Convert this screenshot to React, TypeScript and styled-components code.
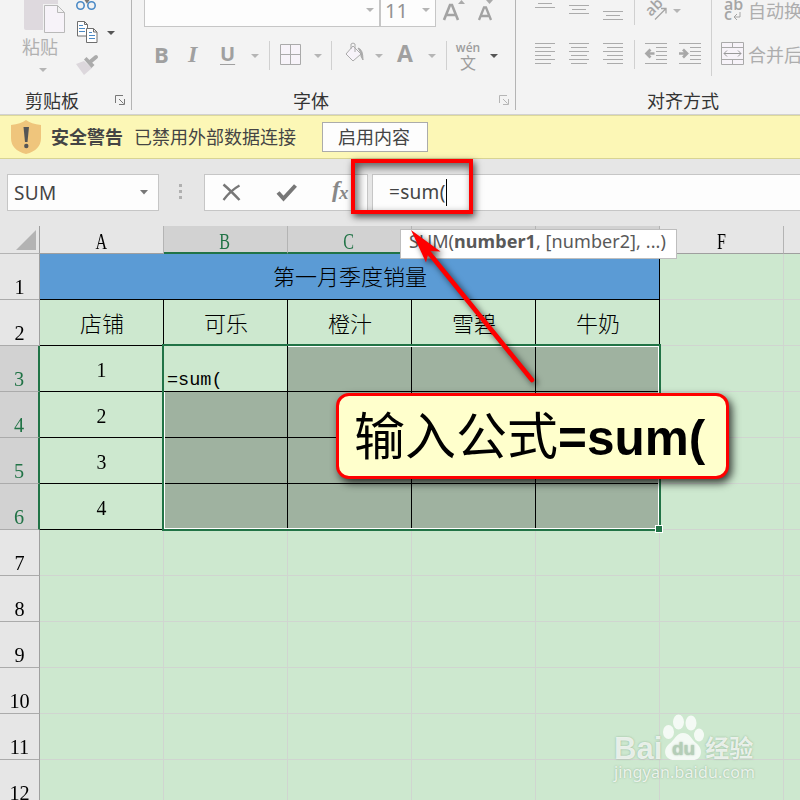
import React from 'react';
import styled, { createGlobalStyle, css } from 'styled-components';

const UI = '"Noto Sans", "Noto Sans CJK SC", sans-serif';
const CJK = '"Noto Sans CJK SC", "Noto Sans", sans-serif';
const SHEET = '"Liberation Serif", "Noto Sans CJK SC", serif';

const GlobalStyle = createGlobalStyle`
  * { box-sizing: border-box; }
  html, body { margin: 0; padding: 0; overflow: hidden; }
`;

const Window = styled.div`
  position: relative;
  width: 800px;
  height: 800px;
  overflow: hidden;
  display: flex;
  flex-direction: column;
  background: #e6e6e6;
  font-family: ${UI};
`;

/* ---------- ribbon ---------- */
const Ribbon = styled.div`
  flex: none;
  display: flex;
  height: 115px;
  background: #f3f3f3;
  border-bottom: 1px solid #d2d2d2;
`;

const Group = styled.section<{ $w: number }>`
  flex: none;
  display: flex;
  flex-direction: column;
  width: ${p => p.$w}px;
  height: 110px;
  border-right: 1px solid #b4b4b4;
`;

const GroupTools = styled.div`
  display: flex;
  height: 87px;
`;

const GroupCaption = styled.div<{ $left: number }>`
  display: flex;
  align-items: center;
  justify-content: space-between;
  height: 23px;
  padding: 3px 6px 0 ${p => p.$left}px;
  font: 18px/20px ${CJK};
  color: #333;
  white-space: nowrap;
`;

const Stack = styled.div<{ $w: number }>`
  flex: none;
  display: flex;
  flex-direction: column;
  width: ${p => p.$w}px;
`;

const Strip = styled.div<{ $h: number; $pad?: number }>`
  flex: none;
  display: flex;
  height: ${p => p.$h}px;
  padding-left: ${p => p.$pad ?? 0}px;
`;

const Tool = styled.div<{ $w: number }>`
  flex: none;
  width: ${p => p.$w}px;
  display: flex;
`;

const Glyph = styled.svg`
  flex: none;
  display: block;
  overflow: visible;
`;

const PasteLabel = styled.div`
  height: 26px;
  padding-left: 22px;
  font: 18px/24px ${CJK};
  color: #b1b1b1;
`;

const Combo = styled.div<{ $w: number }>`
  flex: none;
  display: flex;
  justify-content: space-between;
  width: ${p => p.$w}px;
  height: 27px;
  padding: 0 5px 0 4px;
  border: 1px solid #c6c6c6;
  border-top: 0;
  background: #fdfdfd;
  font: 20px/22px ${UI};
  color: #929292;
`;

const Letter = styled.span<{ $size: number; $top: number; $italic?: boolean; $under?: boolean }>`
  margin-top: ${p => p.$top}px;
  height: 24px;
  font: ${p => (p.$italic ? 'italic' : 'normal')} 700 ${p => p.$size}px/24px
    ${p => (p.$italic ? '"Liberation Serif", serif' : '"Open Sans", sans-serif')};
  color: #a0a0a0;
  ${p => p.$under && css`text-decoration: underline; text-decoration-thickness: 1px; text-underline-offset: 3px;`}
`;

const Separator = styled.i<{ $top: number; $h: number }>`
  flex: none;
  width: 1px;
  height: ${p => p.$h}px;
  margin-top: ${p => p.$top}px;
  background: #d0d0d0;
`;

const Pinyin = styled.div`
  width: 22px;
  margin-top: 13px;
  display: flex;
  flex-direction: column;
  align-items: center;
  color: #9d9d9d;
  font: 600 12px/14px "Open Sans", sans-serif;
  span { font: 16px/14px ${CJK}; }
`;

const ToolText = styled.span<{ $top: number }>`
  margin: ${p => p.$top}px 0 0 -1px;
  height: 24px;
  font: 18px/24px ${CJK};
  color: #adadad;
  white-space: nowrap;
`;

/* ---------- message bar ---------- */
const MessageBar = styled.div`
  flex: none;
  display: flex;
  align-items: center;
  height: 44px;
  padding-left: 11px;
  background: #fcf7b6;
  border-top: 1px solid #dcd89b;
  border-bottom: 1px solid #d8d493;
  font: 18px/24px ${CJK};
  color: #444;
  white-space: nowrap;
`;

const Warning = styled.strong`
  margin: -2px 11px 0 10px;
`;

const Notice = styled.span`
  margin-top: -2px;
`;

const EnableButton = styled.button`
  width: 106px;
  height: 30px;
  margin-left: 26px;
  padding: 0 2px 2px 0;
  border: 1px solid #ababab;
  background: #fdfdfd;
  font: 18px/24px ${CJK};
  color: #444;
`;

/* ---------- formula bar ---------- */
const FormulaBar = styled.div`
  flex: none;
  display: flex;
  height: 67px;
  padding: 15px 0 0 7px;
`;

const FieldBox = styled.div<{ $w: number; $ml?: number }>`
  flex: none;
  display: flex;
  align-items: center;
  width: ${p => p.$w}px;
  height: 37px;
  margin-left: ${p => p.$ml ?? 0}px;
  border: 1px solid #c6c6c6;
  background: #fdfdfd;
  color: #444;
  font: 19px/34px ${UI};
`;

const NameText = styled.span`
  flex: 1;
  padding-left: 6px;
  letter-spacing: 0.3px;
`;

const FormulaText = styled.span`
  margin: -1px 0 0 16px;
  letter-spacing: 0.3px;
`;

const Caret = styled.i`
  width: 1px;
  height: 27px;
  background: #000;
`;

const Dots = styled.div`
  display: flex;
  flex-direction: column;
  gap: 3px;
  margin: 10px 0 0 20px;
  i { width: 3px; height: 3px; background: #b0b0b0; }
`;

/* ---------- sheet ---------- */
const Sheet = styled.div`
  position: relative;
  isolation: isolate;
  flex: none;
  width: 908px;
  height: 574px;
  overflow: hidden;
`;

const Row = styled.div<{ $h?: number }>`
  display: flex;
  height: ${p => p.$h ?? 46}px;
`;

const ColumnHead = styled.div<{ $on?: boolean }>`
  flex: none;
  display: flex;
  justify-content: center;
  width: 124px;
  height: 28px;
  padding-right: 1px;
  border-right: 1px solid #b4b4b4;
  border-bottom: ${p => (p.$on ? '2px solid #217346' : '1px solid #9f9f9f')};
  background: ${p => (p.$on ? '#d2d2d2' : '#e6e6e6')};
  color: ${p => (p.$on ? '#217346' : '#000')};
  font: 23px/32px ${SHEET};
  span { transform: scaleX(0.7); }
`;

const Corner = styled.div`
  flex: none;
  width: 40px;
  height: 28px;
  padding: 4px 0 0 16px;
  border-right: 1px solid #9f9f9f;
  border-bottom: 1px solid #b4b4b4;
`;

const RowHead = styled.div<{ $on?: boolean }>`
  flex: none;
  width: 40px;
  height: 46px;
  padding-top: 20px;
  text-align: center;
  border-right: ${p => (p.$on ? '2px solid #217346' : '1px solid #9f9f9f')};
  border-bottom: 1px solid #ababab;
  background: ${p => (p.$on ? '#d2d2d2' : '#e6e6e6')};
  color: ${p => (p.$on ? '#217346' : '#000')};
  font: 22px/26px ${SHEET};
  span { display: block; transform: scaleX(0.92); }
`;

type CellKind = 'empty' | 'data' | 'picked' | 'edit' | 'title';
const fills: Record<CellKind, string> = {
  empty: '#cde8cf', data: '#cde8cf', picked: '#9fb2a0', edit: '#cde8cf', title: '#5b9bd5',
};

const Cell = styled.div<{ $kind: CellKind; $num?: boolean }>`
  flex: none;
  width: ${p => (p.$kind === 'title' ? 620 : 124)}px;
  height: 46px;
  padding: ${p => (p.$kind === 'data' && !p.$num ? 9 : 8)}px 0 0 1px;
  border-right: 1px solid ${p => (p.$kind === 'empty' ? '#d0d5d0' : '#000')};
  border-bottom: 1px solid ${p => (p.$kind === 'empty' ? '#d0d5d0' : '#000')};
  background: ${p => fills[p.$kind]};
  color: #000;
  text-align: center;
  font: ${p => (p.$num ? 400 : 300)} 22px/32px ${SHEET};
  ${p => p.$num && css`
    padding-left: 0;
    span { display: block; transform: scaleX(0.9); }
  `}
  ${p => p.$kind === 'edit' && css`
    position: relative;
    z-index: 2;
    padding: 19px 0 0 3px;
    text-align: left;
    font: 18.5px/32px "Liberation Mono", monospace;
  `}
`;

const Selection = styled.div`
  position: absolute;
  z-index: 1;
  left: 162px;
  top: 118px;
  width: 499px;
  height: 187px;
  border: 2px solid #217346;
  box-shadow: inset 0 0 0 1px #fff;
`;

const SelectionEdge = styled(Selection)`
  z-index: 3;
  box-shadow: none;
`;

const FillHandle = styled.i`
  position: absolute;
  right: -4px;
  bottom: -4px;
  width: 8px;
  height: 8px;
  border: 1px solid #fff;
  background: #217346;
`;

/* ---------- overlays ---------- */
const FunctionTip = styled.div`
  position: absolute;
  left: 400px;
  top: 229px;
  width: 277px;
  height: 30px;
  padding-left: 8px;
  border: 1px solid #bebebe;
  background: #fff;
  color: #595959;
  font: 18px/23px ${UI};
  letter-spacing: 0.07px;
  white-space: nowrap;
`;

const Highlight = styled.div`
  position: absolute;
  left: 351px;
  top: 159px;
  width: 122px;
  height: 55px;
  border: 4px solid #fe0000;
  box-shadow: 2px 3px 7px rgba(0, 0, 0, 0.65), inset 3px 4px 8px rgba(0, 0, 0, 0.6);
`;

const Pointer = styled.svg`
  position: absolute;
  left: 400px;
  top: 220px;
  overflow: visible;
  filter: drop-shadow(3px 3px 3px rgba(0, 0, 0, 0.65));
`;

const Callout = styled.div`
  position: absolute;
  left: 336px;
  top: 393px;
  width: 393px;
  height: 86px;
  padding-left: 15px;
  border: 3px solid #fe0000;
  border-radius: 13px;
  background: #ffffcc;
  box-shadow: 3px 4px 8px rgba(0, 0, 0, 0.75);
  color: #000;
  white-space: nowrap;
  font: 51px/74px ${CJK};
  b { font: 700 49.5px/74px "Liberation Sans", sans-serif; }
`;

const Watermark = styled.div`
  position: absolute;
  left: 614px;
  top: 713px;
  width: 146px;
  color: rgba(255, 255, 255, 0.78);
  text-shadow: 0 0 2px rgba(100, 140, 105, 0.6);
`;

const Brand = styled.div`
  display: flex;
  align-items: flex-end;
  height: 48px;
  font: 700 31px/25px "Liberation Sans", sans-serif;
  span + svg + span { font: 700 24px/28px ${CJK}; }
`;

const Site = styled.div`
  padding-top: 1px;
  font: 16px/20px ${UI};
  letter-spacing: 0.15px;
`;

const Drop = ({ dark, top }: { dark?: boolean; top: number }) => (
  <Glyph width="8" height={top + 5}>
    <path d={`M0 ${top}h8l-4 4z`} fill={dark ? '#555' : '#b5b5b5'} />
  </Glyph>
);

const Launcher = ({ dark }: { dark?: boolean }) => (
  <Glyph width="10" height="10" stroke={dark ? '#777' : '#b5b5b5'} fill="none">
    <path d="M.5 8V.5H8M4 4l4.500 4.500M9.500 4v5.500H4" />
  </Glyph>
);

const Lines = ({ kind }: { kind: 'left' | 'center' | 'right' }) => (
  <Glyph width="20" height="40" stroke="#ababab" fill="none">
    {[43, 47, 51, 55, 59, 63].map((y, i) => {
      const w = i % 2 ? 16 : 20;
      const x = kind === 'left' ? 0 : kind === 'right' ? 20 - w : (20 - w) / 2;
      return <path key={y} d={`M${x} ${y - 24.5}h${w}`} />;
    })}
  </Glyph>
);

const Indent = ({ into }: { into?: boolean }) => (
  <Glyph width="22" height="44" stroke="#ababab" fill="none">
    <path d="M0 18.500h22M11 22.500h11M11 26.500h11M11 30.500h11M11 34.500h11M0 38.500h22" />
    <path d={into ? 'M0 28.500h7M4 24.500l4 4-4 4' : 'M9.500 28.500H2.500M5.500 24.500l-4 4 4 4'} strokeWidth="2.700" stroke="#a8a8a8" />
  </Glyph>
);

const columns = ['A', 'B', 'C', 'D', 'E', 'F', ''];
const products = ['店铺', '可乐', '橙汁', '雪碧', '牛奶'];

export default function App() {
  return (
    <>
      <GlobalStyle />
      <Window>
        <Ribbon>
          <Group $w={132}>
            <GroupTools>
              <Stack $w={76}>
                <Glyph width="66" height="34">
                  <path d="M24 0h34v30H26q-2 0-2-2z" fill="#ded9de" />
                  <path d="M43 4h15l7 8v21H43z" fill="#f2f2f2" />
                  <path d="M44.500 5.500h13l7 7v20h-20zM57.500 5.500v7h7" fill="#f7f3f9" stroke="#b9b9b9" />
                </Glyph>
                <PasteLabel>粘贴</PasteLabel>
                <Strip $h={16} $pad={39}><Drop top={8} /></Strip>
              </Stack>
              <Stack $w={55}>
                <Glyph width="22" height="12" fill="none">
                  <path d="M7-4l4 6 4-6" stroke="#777" strokeWidth="2" />
                  <circle cx="4.500" cy="5.500" r="3.700" stroke="#4b8ac6" strokeWidth="1.600" />
                  <circle cx="15.500" cy="5.500" r="3.700" stroke="#4b8ac6" strokeWidth="1.600" />
                </Glyph>
                <Strip $h={38} $pad={1}>
                  <Tool $w={30}>
                    <Glyph width="22" height="34" fill="#fff" stroke="#6e6e6e">
                      <path d="M.5 9.500h7l3 3v11.500H.5zM7.500 9.500v3h3" />
                      <path d="M9.500 16.500h7l3.500 3.500v10.500H9.500zM16.500 16.500v3.500h3.500" />
                      <path d="M2 13.500h4M2 16.500h6M2 19.500h6M12 20.500h3M12 23.500h6M12 26.500h6" stroke="#4b8ac6" />
                    </Glyph>
                  </Tool>
                  <Drop dark top={19} />
                </Strip>
                <Glyph width="22" height="28">
                  <path d="M0 14l8-3 8 7-8 7z" fill="#dcd7dc" />
                  <path d="M8 9.500l2.500-2.500 8 8-3 3z" fill="#ababab" />
                  <path d="M14 12l6-5" stroke="#ababab" strokeWidth="4" strokeLinecap="round" />
                </Glyph>
              </Stack>
            </GroupTools>
            <GroupCaption $left={25}>剪贴板<Launcher dark /></GroupCaption>
          </Group>

          <Group $w={384}>
            <GroupTools>
              <Stack $w={383}>
                <Strip $h={28} $pad={12}>
                  <Combo $w={236}><span /><Drop top={8} /></Combo>
                  <Combo $w={56}>11<Drop top={8} /></Combo>
                  <Tool $w={33}>
                    <Glyph width="30" height="22">
                      <path d="M22 4l3.500-4 3.500 4z" fill="#aaa" />
                      <path d="M8 20l6-15h2l6 15M10 15h9" fill="none" stroke="#a3a3a3" strokeWidth="2.600" />
                    </Glyph>
                  </Tool>
                  <Glyph width="30" height="22">
                    <path d="M17 0h7l-3.500 4z" fill="#aaa" />
                    <path d="M10 20l5-12.500h2l5 12.500M12 16h8" fill="none" stroke="#a3a3a3" strokeWidth="2.300" />
                  </Glyph>
                </Strip>
                <Strip $h={59} $pad={22}>
                  <Tool $w={34}><Letter $size={22} $top={14}>B</Letter></Tool>
                  <Tool $w={32}><Letter $size={24} $top={14} $italic>I</Letter></Tool>
                  <Tool $w={31}><Letter $size={20} $top={14} $under>U</Letter></Tool>
                  <Tool $w={18}><Drop top={26} /></Tool>
                  <Tool $w={11}><Separator $top={13} $h={29} /></Tool>
                  <Tool $w={34}>
                    <Glyph width="22" height="40" fill="#f7f3f9" stroke="#aaa">
                      <path d="M.5 16.500h20v20H.5zM10.500 16.500v20M.5 26.500h20" />
                    </Glyph>
                  </Tool>
                  <Tool $w={17}><Drop top={26} /></Tool>
                  <Tool $w={14}><Separator $top={13} $h={29} /></Tool>
                  <Tool $w={30}>
                    <Glyph width="20" height="40" fill="#f7f3f9" stroke="#aaa">
                      <path d="M1 26l7-8 8 8-8 7z" />
                      <path d="M6 21v-5q2-2 4 0v8" fill="none" />
                      <path d="M13 20q5 1 5 12-3-4-2-7z" fill="#aaa" />
                    </Glyph>
                  </Tool>
                  <Tool $w={22}><Drop top={26} /></Tool>
                  <Tool $w={31}><Letter $size={23} $top={13}>A</Letter></Tool>
                  <Tool $w={18}><Drop top={26} /></Tool>
                  <Tool $w={11}><Separator $top={13} $h={29} /></Tool>
                  <Tool $w={33}><Pinyin>wén<span>文</span></Pinyin></Tool>
                  <Drop dark top={26} />
                </Strip>
              </Stack>
            </GroupTools>
            <GroupCaption $left={161}>字体<Launcher /></GroupCaption>
          </Group>

          <Group $w={344}>
            <GroupTools>
              <Stack $w={195}>
                <Strip $h={25} $pad={19}>
                  <Tool $w={34}><Glyph width="20" height="22" stroke="#ababab"><path d="M3 3.500h14M0 7.500h20M0 -.5h20" /></Glyph></Tool>
                  <Tool $w={34}><Glyph width="20" height="22" stroke="#ababab"><path d="M0 5.500h20M3 9.500h14M0 13.500h20" /></Glyph></Tool>
                  <Tool $w={31}><Glyph width="20" height="22" stroke="#ababab"><path d="M0 11.500h20M3 15.500h14M0 19.500h20" /></Glyph></Tool>
                  <Tool $w={12}><Separator $top={0} $h={25} /></Tool>
                  <Tool $w={27}>
                    <Glyph width="22" height="22">
                      <text x="5" y="17" transform="rotate(-45 5 17)" fontSize="15" fontWeight="600" fontFamily="Open Sans" fill="#a5a5a5">ab</text>
                      <path d="M9 19.500L20 8.500M15 8.500h5v5" fill="none" stroke="#a5a5a5" strokeWidth="1.300" />
                    </Glyph>
                  </Tool>
                  <Drop top={9} />
                </Strip>
                <Strip $h={60} $pad={19}>
                  <Tool $w={34}><Lines kind="left" /></Tool>
                  <Tool $w={34}><Lines kind="center" /></Tool>
                  <Tool $w={31}><Lines kind="right" /></Tool>
                  <Tool $w={11}><Separator $top={15} $h={29} /></Tool>
                  <Tool $w={34}><Indent /></Tool>
                  <Indent into />
                </Strip>
              </Stack>
              <Separator $top={0} $h={76} />
              <Stack $w={140}>
                <Strip $h={28} $pad={11}>
                  <Tool $w={26}>
                    <Glyph width="22" height="22" fontSize="16" fontFamily="Open Sans" fontWeight="600" fill="#a5a5a5">
                      <text x="1" y="10">ab</text><text x="1" y="20">c</text>
                      <path d="M17 12v5h-6M14 14l-3 3 3 3" fill="none" stroke="#a5a5a5" />
                    </Glyph>
                  </Tool>
                  <ToolText $top={-2}>自动换行</ToolText>
                </Strip>
                <Strip $h={40} $pad={9}>
                  <Tool $w={28}>
                    <Glyph width="24" height="38" fill="#f7f3f9" stroke="#aaa">
                      <path d="M.5 14.500h22v22H.5zM.5 19.500h22M.5 31.500h22M11.500 14.500v5M11.500 31.500v5" />
                      <path d="M3 25.500h17M6 22.500l-3 3 3 3M17 22.500l3 3-3 3" fill="none" stroke="#999" />
                    </Glyph>
                  </Tool>
                  <ToolText $top={14}>合并后居中</ToolText>
                </Strip>
              </Stack>
            </GroupTools>
            <GroupCaption $left={131}>对齐方式</GroupCaption>
          </Group>
        </Ribbon>

        <MessageBar>
          <Glyph width="30" height="34">
            <path d="M15 0q5 4 15 5v13q0 12-15 16Q0 30 0 18V5Q10 4 15 0z" fill="#efc57c" />
            <path d="M12.500 7h5.500l-1.500 15h-2.500z" fill="#555" />
            <circle cx="15.300" cy="26" r="2.200" fill="#555" />
          </Glyph>
          <Warning>安全警告</Warning>
          <Notice>已禁用外部数据连接</Notice>
          <EnableButton>启用内容</EnableButton>
        </MessageBar>

        <FormulaBar>
          <FieldBox $w={152}>
            <NameText>SUM</NameText>
            <Tool $w={18}><Glyph width="8" height="5"><path d="M0 0h8l-4 4.500z" fill="#777" /></Glyph></Tool>
          </FieldBox>
          <Dots><i /><i /><i /></Dots>
          <FieldBox $w={164} $ml={22}>
            <Glyph width="162" height="35" fill="none" stroke="#777">
              <path d="M18.500 9.500q7 6 16 15.500" strokeWidth="2.500" />
              <path d="M34.500 10.500q-9 5-16 14.500" strokeWidth="2.200" />
              <path d="M73 17.500l5.500 6L90.500 10.500" strokeWidth="4" />
              <text x="127" y="22" fontFamily="Liberation Serif" fontSize="24" fontStyle="italic" fontWeight="700" fill="#888" stroke="none">f</text>
              <text x="134" y="24" fontFamily="Liberation Serif" fontSize="19" fontStyle="italic" fontWeight="700" fill="#888" stroke="none">x</text>
            </Glyph>
          </FieldBox>
          <FieldBox $w={440} $ml={4}><FormulaText>=sum(</FormulaText><Caret /></FieldBox>
        </FormulaBar>

        <Sheet>
          <Row $h={28}>
            <Corner><Glyph width="20" height="20"><path d="M20 0v20H0z" fill="#b3b3b3" /></Glyph></Corner>
            {columns.map((c, i) => <ColumnHead key={i} $on={i > 0 && i < 5}><span>{c}</span></ColumnHead>)}
          </Row>
          <Row>
            <RowHead><span>1</span></RowHead>
            <Cell $kind="title">第一月季度销量</Cell>
            <Cell $kind="empty" /><Cell $kind="empty" />
          </Row>
          <Row>
            <RowHead><span>2</span></RowHead>
            {products.map(p => <Cell key={p} $kind="data">{p}</Cell>)}
            <Cell $kind="empty" /><Cell $kind="empty" />
          </Row>
          {[1, 2, 3, 4].map(n => (
            <Row key={n}>
              <RowHead $on><span>{n + 2}</span></RowHead>
              <Cell $kind="data" $num><span>{n}</span></Cell>
              {n === 1 ? <Cell $kind="edit">=sum(</Cell> : <Cell $kind="picked" />}
              <Cell $kind="picked" /><Cell $kind="picked" /><Cell $kind="picked" />
              <Cell $kind="empty" /><Cell $kind="empty" />
            </Row>
          ))}
          {[7, 8, 9, 10, 11, 12].map(n => (
            <Row key={n}>
              <RowHead><span>{n}</span></RowHead>
              {columns.map((_, i) => <Cell key={i} $kind="empty" />)}
            </Row>
          ))}
          <Selection />
          <SelectionEdge><FillHandle /></SelectionEdge>
        </Sheet>

        <FunctionTip>SUM(<b>number1</b>, [number2], ...)</FunctionTip>
        <Highlight />
        <Pointer width="140" height="170">
          <path d="M25 28L132 160" stroke="#fe0000" strokeWidth="4.600" strokeLinecap="round" />
          <path d="M11 10l29.500 21.500-11.500-.5-3 11.500z" fill="#fe0000" />
        </Pointer>
        <Callout>输入公式<b>=sum(</b></Callout>
        <Watermark>
          <Brand>
            <span>Bai</span>
            <Glyph width="43" height="48" fill="rgba(255,255,255,.78)">
              <ellipse cx="6.500" cy="19" rx="5.500" ry="7" />
              <ellipse cx="16.500" cy="9" rx="5.500" ry="7.500" />
              <ellipse cx="29" cy="10" rx="5.500" ry="7.500" />
              <ellipse cx="37" cy="22" rx="5" ry="6.500" />
              <path d="M21 20c7 0 8 6 13 10 8 6 6 17-3 17H12c-9 0-12-10-5-16C13 27 14 20 21 20z" />
              <text x="10" y="42" fontFamily="Liberation Sans" fontSize="19" fontWeight="700" fill="#b5ceb8">du</text>
            </Glyph>
            <span>经验</span>
          </Brand>
          <Site>jingyan.baidu.com</Site>
        </Watermark>
      </Window>
    </>
  );
}
